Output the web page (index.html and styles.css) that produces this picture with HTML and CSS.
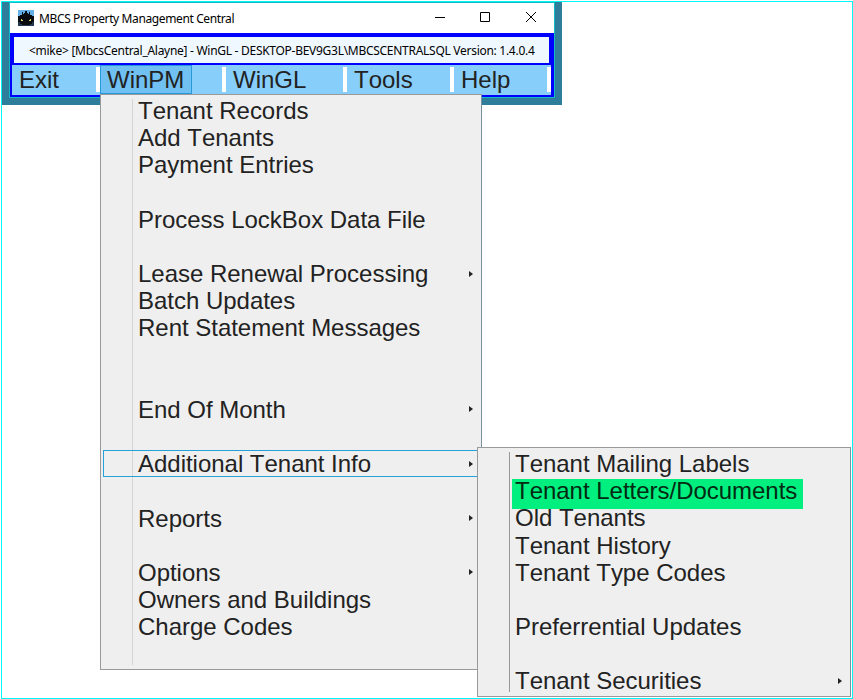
FILE: index.html
```
<!DOCTYPE html>
<html lang="en">
<head>
<meta charset="utf-8">
<title>MBCS Property Management Central</title>
<link rel="stylesheet" href="styles.css">
</head>
<body>
<div class="frame">
  <div class="backdrop">
    <div class="window">
      <header class="titlebar">
        <svg class="app-icon" width="16" height="16" viewBox="0 0 16 16" shape-rendering="crispEdges">
          <path fill="#63b1e8" d="M0 0h16v9H0z"/>
          <path fill="#0b0c10" d="M0 6h2V5h2V4h2V3h1V1h2v2h1v1h2v1h2v1h2v10H0z"/>
          <path fill="#0b0c10" d="M4 2h1v2H4zM11 2h1v2h-1z"/>
          <path fill="#23384e" d="M0 12h2v1h2v2h8v-1h2v-2h2v4H0z"/>
          <path fill="#090a0c" d="M1 7h14v4h-1v3h-2v1H4v-1H2v-3H1z"/>
          <path fill="#d9d66b" d="M3 9h1v1h1v1H3zM12 9h1v2h-2v-1h1z"/>
        </svg>
        <span class="title">MBCS Property Management Central</span>
        <svg class="controls" width="103" height="12" viewBox="0 0 103 12" fill="none" stroke="#000">
          <path d="M0 6.500h10"/>
          <path d="M45.500 1.500h9v9h-9z"/>
          <path d="M91 1l10 10M101 1L91 11"/>
        </svg>
      </header>
      <div class="client">
        <div class="status"><span>&lt;mike&gt; [MbcsCentral_Alayne] - WinGL - DESKTOP-BEV9G3L\MBCSCENTRALSQL Version: 1.4.0.4</span></div>
        <nav class="menubar">
          <div class="top exit">Exit</div>
          <div class="top winpm"><span class="open">WinPM</span></div>
          <div class="top wingl">WinGL</div>
          <div class="top tools">Tools</div>
          <div class="top help">Help</div>
        </nav>
      </div>
    </div>
  </div>
</div>
<ul class="menu main-menu">
  <li>Tenant Records</li>
  <li>Add Tenants</li>
  <li>Payment Entries</li>
  <li></li>
  <li>Process LockBox Data File</li>
  <li></li>
  <li class="more">Lease Renewal Processing</li>
  <li>Batch Updates</li>
  <li>Rent Statement Messages</li>
  <li></li>
  <li></li>
  <li class="more">End Of Month</li>
  <li></li>
  <li class="more selected">Additional Tenant Info</li>
  <li></li>
  <li class="more">Reports</li>
  <li></li>
  <li class="more">Options</li>
  <li>Owners and Buildings</li>
  <li>Charge Codes</li>
</ul>
<ul class="menu sub-menu">
  <li>Tenant Mailing Labels</li>
  <li><span class="marked">Tenant Letters/Documents</span></li>
  <li>Old Tenants</li>
  <li>Tenant History</li>
  <li>Tenant Type Codes</li>
  <li></li>
  <li>Preferrential Updates</li>
  <li></li>
  <li class="more">Tenant Securities</li>
</ul>
</body>
</html>
```
FILE: styles.css
```
* { box-sizing: border-box; }
body {
  margin: 0;
  width: 853px;
  height: 699px;
  overflow: hidden;
  background: #fff;
  padding: 1px 0 0 1px;
  font-family: "Liberation Sans", Arial, sans-serif;
  font-kerning: none;
  color: #222;
}
.frame { width: 852px; height: 698px; border: 1px solid #00f5f5; }
.backdrop { width: 560px; height: 103px; padding: 0 7px; background: #2e7d9a; }
.window { width: 546px; height: 96px; border: 1px solid #10b9c8; background: #fff; }
.titlebar {
  display: flex;
  align-items: center;
  height: 30px;
  padding-left: 8px;
  font: 12px "Noto Sans", "Open Sans", sans-serif;
  font-kerning: normal;
  color: #000;
}
.app-icon { margin: 0 5px 1px 0; }
.title { width: 396px; white-space: nowrap; letter-spacing: -0.38px; }
.controls { margin-bottom: 2px; }
.client { height: 64px; border: 2px solid #00f; border-top-width: 0; border-right-width: 3px; }
.status {
  height: 32px;
  border: 2px solid #00f;
  border-top-width: 4px;
  background: #f0f8ff;
  padding-left: 15px;
  font: 12px/28px "Noto Sans", "Open Sans", sans-serif;
  font-kerning: normal;
  letter-spacing: -0.28px;
  white-space: nowrap;
  color: #000;
}
.menubar { display: flex; height: 30px; padding: 0; background: #87cefa; }
.top {
  position: relative;
  height: 30px;
  padding-left: 7px;
  font-size: 24px;
  line-height: 30px;
}
.top::after {
  content: "";
  position: absolute;
  right: 0;
  top: 2px;
  width: 4px;
  height: 25px;
  background: #fff;
}
.exit { width: 88px; }
.winpm { width: 126px; padding-left: 0; }
.wingl { width: 121px; }
.tools { width: 107px; }
.help { width: 97px; }
.open {
  display: block;
  width: 92px;
  height: 29px;
  padding-left: 6px;
  line-height: 28px;
  border: 1px solid #2699dc;
  background: #70c0f2;
}
.menu {
  position: absolute;
  margin: 0;
  padding: 2.100px 2px 2px;
  list-style: none;
  background: #efefef;
  border: 1px solid #999;
  border-right-color: #76909f;
  font-size: 24px;
  letter-spacing: -0.02px;
}
.menu::before {
  content: "";
  position: absolute;
  left: 31px;
  top: 4px;
  bottom: 4px;
  width: 1px;
  background: #d4d4d4;
}
.main-menu { left: 100px; top: 94px; width: 382px; height: 576px; }
.sub-menu { left: 477px; top: 447px; width: 374px; height: 250px; }
.sub-menu::before { background: #999; }
.menu li {
  position: relative;
  height: 27.18px;
  padding-left: 35px;
  line-height: 27px;
  white-space: nowrap;
}
.more::after {
  content: "";
  position: absolute;
  right: 6px;
  top: 10.400px;
  border-left: 4px solid #222;
  border-top: 3.500px solid transparent;
  border-bottom: 3.500px solid transparent;
}
.selected::before {
  content: "";
  position: absolute;
  left: 0;
  top: 0;
  width: 376px;
  height: 24.500px;
  border: 1px solid #26a0da;
}
.marked {
  display: block;
  position: relative;
  top: 1.500px;
  width: 291px;
  height: 30px;
  margin-left: -3px;
  padding-left: 3px;
  line-height: 24px;
  background: #00ef7e;
  color: #032a12;
}
```
